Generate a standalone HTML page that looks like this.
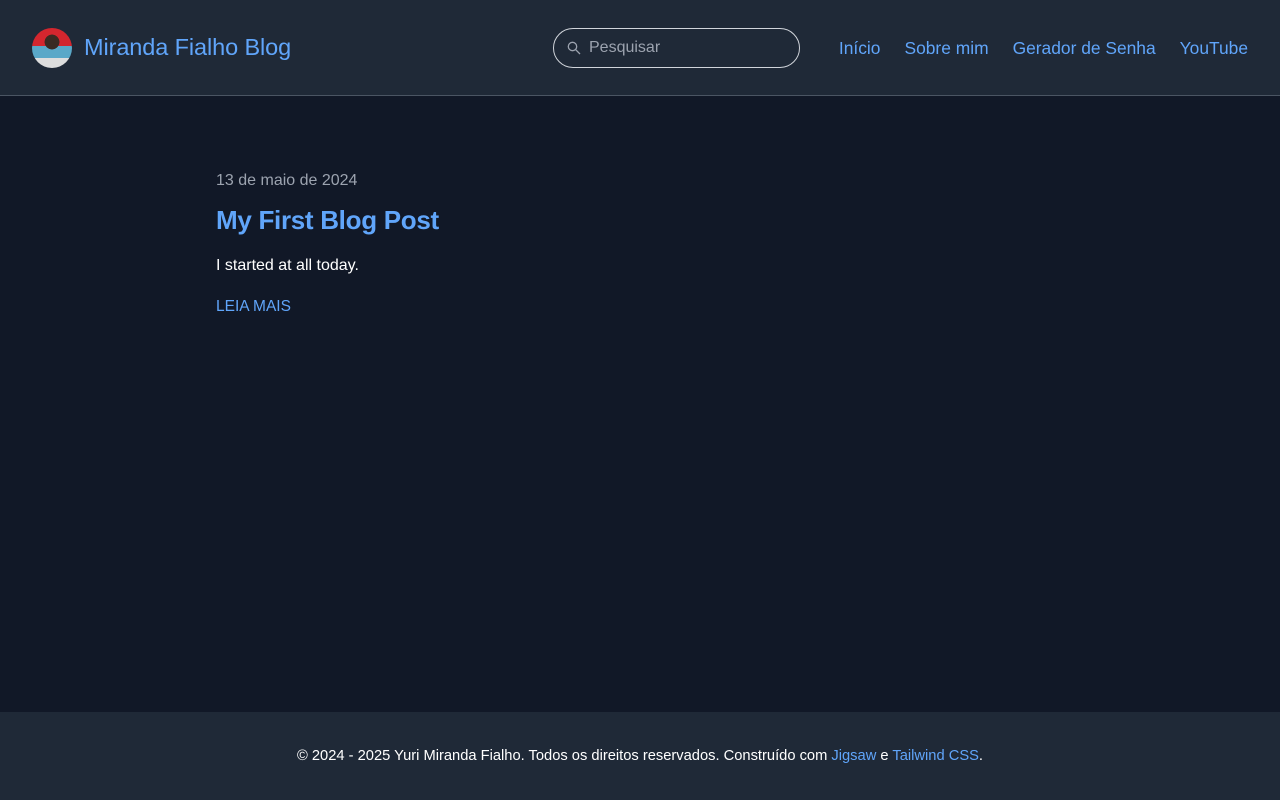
<!DOCTYPE html>
<html><head><meta charset="utf-8"><style>
*{margin:0;padding:0;box-sizing:border-box}
body{width:1280px;height:800px;background:#111827;font-family:"Liberation Sans",sans-serif;position:relative;overflow:hidden}
header{position:absolute;top:0;left:0;width:1280px;height:96px;background:#1f2937;border-bottom:1px solid #4b5563}
.avatar{position:absolute;left:32px;top:28px;width:40px;height:40px;border-radius:50%;background:radial-gradient(circle at 50% 35%,#3a2a22 0 22%,transparent 23%),linear-gradient(180deg,#d3262e 0 45%,#5aa8c8 45% 75%,#ddd 75%);overflow:hidden}
.title{position:absolute;left:84px;top:34px;font-size:23.5px;color:#60a5fa;letter-spacing:-0.1px}
.search{position:absolute;left:553px;top:28px;width:247px;height:40px;border:1px solid #d1d5db;border-radius:20px}
.search span{position:absolute;left:35px;top:10px;font-size:16px;color:#9ca3af}
.search svg{position:absolute;left:13px;top:12px}
nav{position:absolute;top:38px;right:32px;font-size:17.4px;color:#60a5fa}
nav a{margin-left:24px}
.date{position:absolute;left:216px;top:172px;font-size:16px;color:#9ca3af}
h2{position:absolute;left:216px;top:205px;font-size:26px;color:#60a5fa;font-weight:bold;letter-spacing:-0.3px}
.p{position:absolute;left:216px;top:257px;font-size:16px;color:#fff}
.more{position:absolute;left:216px;top:298px;font-size:15.5px;color:#60a5fa}
footer{position:absolute;left:0;top:712px;width:1280px;height:88px;background:#1f2937;text-align:center;padding-top:36px;font-size:14.7px;color:#fff}
footer a{color:#60a5fa}
</style></head><body>
<header><div class="avatar"></div><div class="title">Miranda Fialho Blog</div>
<div class="search"><svg width="14" height="14" viewBox="0 0 14 14" fill="none" stroke="#9ca3af" stroke-width="1.3"><circle cx="5.5" cy="5.5" r="4.2"/><path d="M8.7 8.7L13 13"/></svg><span>Pesquisar</span></div>
<nav><a>Início</a><a>Sobre mim</a><a>Gerador de Senha</a><a>YouTube</a></nav></header>
<div class="date">13 de maio de 2024</div>
<h2>My First Blog Post</h2>
<div class="p">I started at all today.</div>
<div class="more">LEIA MAIS</div>
<footer>© 2024 - 2025 Yuri Miranda Fialho. Todos os direitos reservados. Construído com <a>Jigsaw</a> e <a>Tailwind CSS</a>.</footer>
</body></html>
